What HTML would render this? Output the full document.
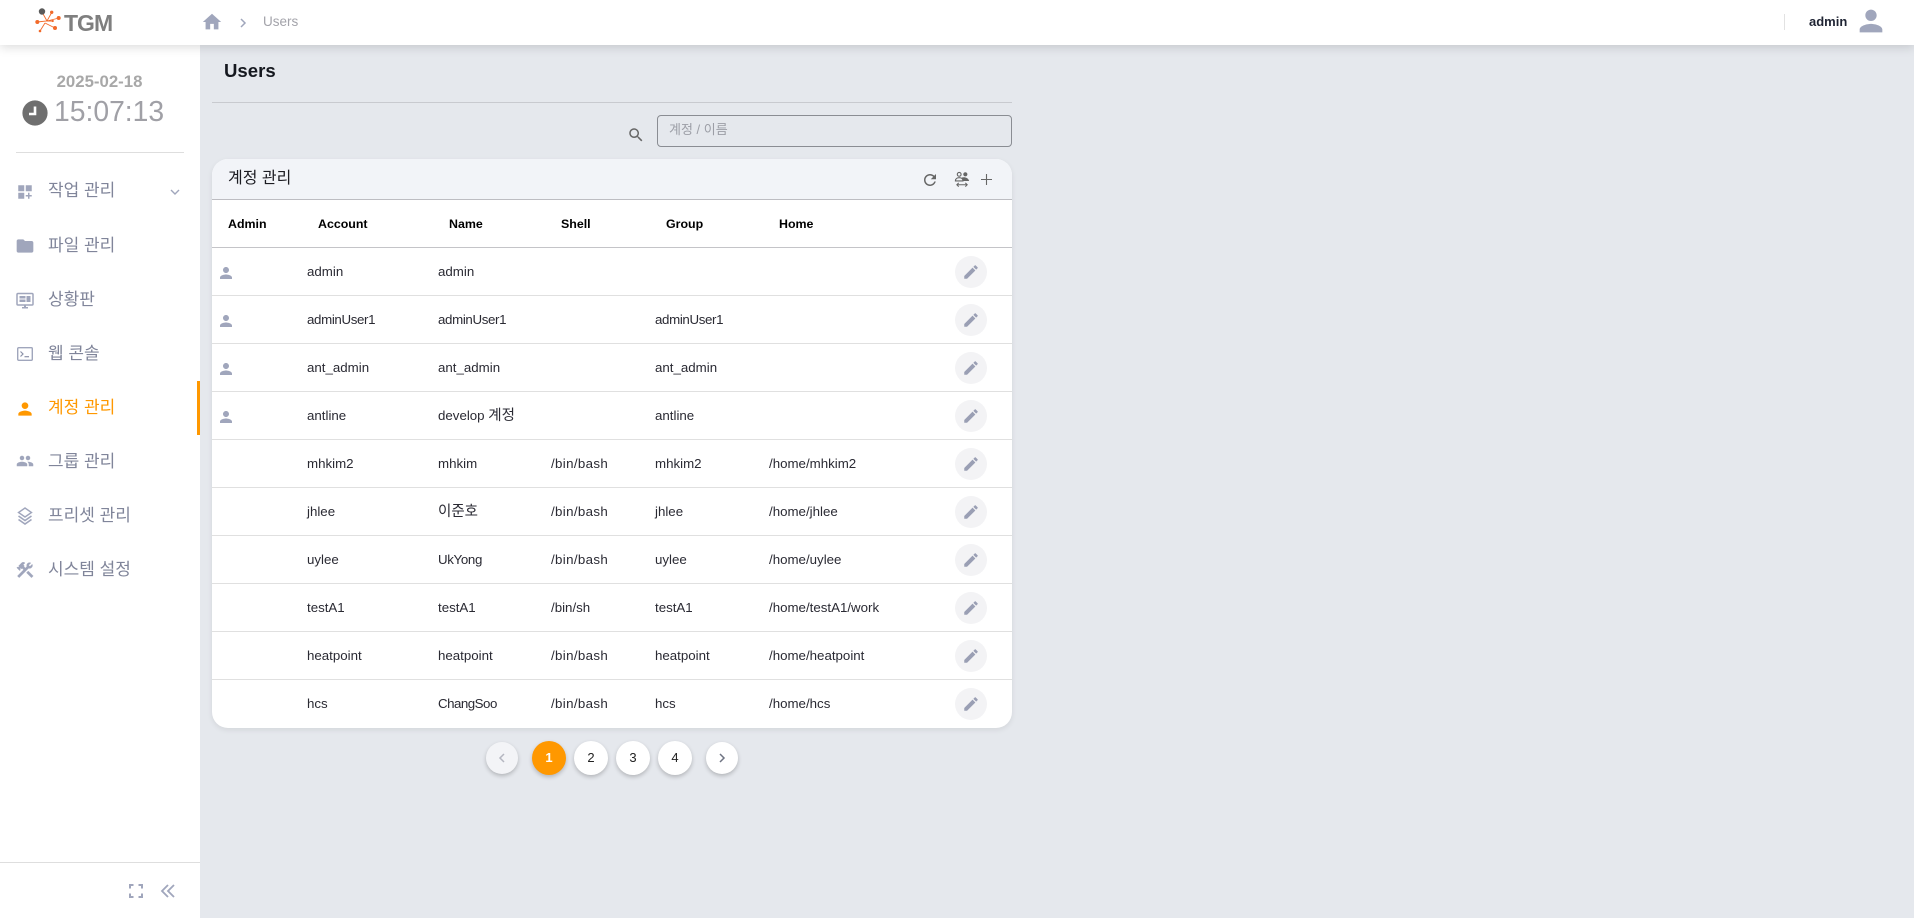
<!DOCTYPE html>
<html lang="ko"><head><meta charset="utf-8"><title>Users</title>
<style>
*{box-sizing:border-box}
html,body{margin:0;padding:0;width:1914px;height:918px;overflow:hidden;background:#e5e8ed;font-family:"Liberation Sans","Noto Sans CJK KR",sans-serif;color:#222}
.a{position:absolute;white-space:nowrap}
svg{position:absolute;display:block}
#hd{position:absolute;left:0;top:0;width:1914px;height:45px;background:#fff;box-shadow:0 2px 10px rgba(0,0,0,.15);z-index:5}
#sb{position:absolute;left:0;top:0;width:200px;height:918px;background:#fff;z-index:3}
.nav{position:absolute;left:48px;font-size:17px;line-height:24px;color:#80859a;white-space:nowrap}
.ic{fill:#a0a6bc}
#card{position:absolute;left:212px;top:159px;width:800px;height:569px;background:#fff;border-radius:16px;box-shadow:0 2px 6px rgba(0,0,0,.08);overflow:hidden}
#ch{position:absolute;left:0;top:0;width:800px;height:41px;background:#f2f4f8;border-bottom:1px solid #bdbdc2}
.th{position:absolute;top:57px;font-size:12.4px;font-weight:bold;line-height:16px;color:#000;white-space:nowrap}
#thl{position:absolute;left:0;top:88px;width:800px;height:1px;background:#c4c4c8}
.r{position:absolute;left:0;width:800px;height:48px;border-bottom:1px solid #e0e0e0}
.r span{position:absolute;top:14px;font-size:13.3px;line-height:20px;color:#2a2a33;white-space:nowrap}
.r .c1{left:95px}.r .c2{left:226px}.r .c3{left:339px;letter-spacing:.35px}.r .c4{left:443px}.r .c5{left:557px}
.r .sh{letter-spacing:0}.r .n{letter-spacing:-.35px}.r .g{letter-spacing:-.5px}
.r i{font-style:normal;font-size:14.5px}
.e{position:absolute;left:743px;top:8px;width:32px;height:32px;border-radius:50%;background:#f3f3f5}
.e svg{left:7px;top:7px;width:18px;height:18px;fill:#9a9fb4}
.u{position:absolute;left:5px;top:16px;width:18px;height:18px;fill:#a0a6bc}
.p{position:absolute;border-radius:50%;background:#fff;box-shadow:0 2px 4px rgba(0,0,0,.22);text-align:center;font-size:13px;color:#222}
</style></head><body>
<svg width="0" height="0" style="position:absolute"><defs>
<symbol id="pen" viewBox="0 0 24 24"><path d="M3 17.25V21h3.75L17.81 9.94l-3.75-3.75L3 17.25zM20.71 7.04c.39-.39.39-1.02 0-1.41l-2.34-2.34c-.39-.39-1.02-.39-1.41 0l-1.83 1.83 3.75 3.75 1.83-1.83z"/></symbol>
<symbol id="usr" viewBox="0 0 24 24"><path d="M12 12c2.21 0 4-1.79 4-4s-1.79-4-4-4-4 1.79-4 4 1.79 4 4 4zm0 2c-2.67 0-8 1.34-8 4v2h16v-2c0-2.66-5.33-4-8-4z"/></symbol>
</defs></svg>

<div id="sb">
  <div class="a" style="left:0;width:200px;top:72px;text-align:center;font-size:16.8px;line-height:20px;font-weight:bold;color:#a8a8a8;text-indent:-1px">2025-02-18</div>
  <svg style="left:22px;top:100px;width:26px;height:26px" viewBox="0 0 26 26"><circle cx="13" cy="13" r="12.6" fill="#6f6f6f"/><path d="M13 6.5v7.5H7" fill="none" stroke="#fff" stroke-width="2.6"/></svg>
  <div class="a" style="left:54px;top:93px;font-size:28.3px;line-height:36px;color:#a0a0a6">15:07:13</div>
  <div class="a" style="left:16px;top:152px;width:168px;height:1px;background:#dedede"></div>

  <svg class="ic" style="left:16px;top:183px;width:18px;height:18px" viewBox="0 0 24 24"><path d="M3 3h8v8H3zm10 0h8v8h-8zM3 13h8v8H3zm15 0h-2v3h-3v2h3v3h2v-3h3v-2h-3z"/></svg>
  <div class="nav" style="top:179px">작업 관리</div>
  <svg style="left:169px;top:186px;width:12px;height:12px" viewBox="0 0 12 12"><path d="M2 4l4 4 4-4" fill="none" stroke="#a0a6bc" stroke-width="1.4"/></svg>

  <svg class="ic" style="left:15px;top:236px;width:20px;height:20px" viewBox="0 0 24 24"><path d="M10 4H4c-1.1 0-1.99.9-1.99 2L2 18c0 1.1.9 2 2 2h16c1.1 0 2-.9 2-2V8c0-1.1-.9-2-2-2h-8l-2-2z"/></svg>
  <div class="nav" style="top:234px">파일 관리</div>

  <svg style="left:16px;top:292px;width:18px;height:18px" viewBox="0 0 18 18"><rect x="1" y="1.5" width="16" height="11.5" rx="1" fill="none" stroke="#a0a6bc" stroke-width="1.5"/><path d="M3.5 4h6v2.5h-6zM10.5 4h4v6h-4zM3.5 7.5h6V10h-6zM6 15h6v1.5H6zM8 13h2v2H8z" fill="#a0a6bc"/></svg>
  <div class="nav" style="top:288px">상황판</div>

  <svg style="left:17px;top:347px;width:16px;height:14px" viewBox="0 0 16 14"><rect x=".7" y=".7" width="14.6" height="12.6" rx="1" fill="none" stroke="#a0a6bc" stroke-width="1.4"/><path d="M3.5 4.5l2.5 2.5-2.5 2.5" fill="none" stroke="#8c92a8" stroke-width="1.2"/><path d="M7.5 9.7h4.5" stroke="#8c92a8" stroke-width="1.2"/></svg>
  <div class="nav" style="top:342px">웹 콘솔</div>

  <svg style="left:15px;top:399px;width:20px;height:20px;fill:#ff9800" viewBox="0 0 24 24"><use href="#usr"/></svg>
  <div class="nav" style="top:396px;color:#ff9800">계정 관리</div>
  <div class="a" style="left:197px;top:381px;width:3px;height:54px;background:#ff9800"></div>

  <svg class="ic" style="left:16px;top:452px;width:18px;height:18px" viewBox="0 0 24 24"><path d="M16 11c1.66 0 2.99-1.34 2.99-3S17.66 5 16 5c-1.66 0-3 1.34-3 3s1.34 3 3 3zm-8 0c1.66 0 2.99-1.34 2.99-3S9.66 5 8 5C6.34 5 5 6.34 5 8s1.34 3 3 3zm0 2c-2.33 0-7 1.17-7 3.5V19h14v-2.5c0-2.33-4.67-3.5-7-3.5zm8 0c-.29 0-.62.02-.97.05 1.16.84 1.97 1.97 1.97 3.45V19h6v-2.5c0-2.33-4.67-3.5-7-3.5z"/></svg>
  <div class="nav" style="top:450px">그룹 관리</div>

  <svg style="left:17px;top:507px;width:16px;height:19px" viewBox="0 0 16 19"><path d="M8 1l6.5 4.5L8 10 1.500 5.500z" fill="none" stroke="#a0a6bc" stroke-width="1.4"/><path d="M1.500 9L8 13.500 14.500 9M1.500 12.500L8 17l6.500-4.500" fill="none" stroke="#a0a6bc" stroke-width="1.6"/></svg>
  <div class="nav" style="top:504px">프리셋 관리</div>

  <svg class="ic" style="left:15px;top:560px;width:20px;height:20px" viewBox="0 0 24 24"><path stroke="#a0a6bc" stroke-width=".4" d="M13.78 15.3L19.78 21.3L21.89 19.14L15.89 13.14L13.78 15.3M17.5 10.1C17.11 10.1 16.69 10.05 16.36 9.91L4.97 21.25L2.86 19.14L10.27 11.74L8.5 9.96L7.78 10.66L6.33 9.25V12.11L5.63 12.81L2.11 9.25L2.81 8.55H5.62L4.22 7.14L7.78 3.58C8.95 2.41 10.83 2.41 12 3.58L9.89 5.74L11.3 7.14L10.59 7.85L12.38 9.63L14.2 7.75C14.06 7.42 14 7 14 6.63C14 4.66 15.56 3.11 17.5 3.11C18.09 3.11 18.61 3.25 19.08 3.53L16.41 6.2L17.91 7.7L20.58 5.03C20.86 5.5 21 6 21 6.63C21 8.55 19.45 10.1 17.5 10.1Z"/></svg>
  <div class="nav" style="top:558px">시스템 설정</div>

  <div class="a" style="left:0;top:862px;width:200px;height:1px;background:#dedede"></div>
  <svg style="left:129px;top:884px;width:14px;height:14px" viewBox="0 0 14 14"><path d="M1 4.500V1H4.500M9.500 1H13V4.500M13 9.500V13H9.500M4.500 13H1V9.500" fill="none" stroke="#a0a6bc" stroke-width="2"/></svg>
  <svg style="left:160px;top:883px;width:16px;height:16px" viewBox="0 0 16 16"><path d="M8 2L2 8l6 6M14 2L8 8l6 6" fill="none" stroke="#a0a6bc" stroke-width="1.8"/></svg>
</div>

<div id="hd">
  <svg style="left:34px;top:7px;width:30px;height:27px" viewBox="0 0 30 27">
    <g stroke="#f26a2a" stroke-width=".9" fill="none"><path d="M8 5l5 9M3 15l10-1 5-9M13 14l12-3M13 14h6M11 16l10 5M11 16l-5 8"/></g>
    <circle cx="8" cy="4.500" r="3.200" fill="#5a5a5a"/>
    <g fill="#f26a2a"><circle cx="17.700" cy="5.300" r="1.700"/><circle cx="24.700" cy="11" r="2"/><circle cx="3.300" cy="15" r="2"/><circle cx="21" cy="21" r="2"/><circle cx="6" cy="24" r="1.300"/><circle cx="18.700" cy="14" r="1.100"/></g>
  </svg>
  <div class="a" style="left:64px;top:9px;font-size:23px;line-height:28px;font-weight:bold;color:#7f7f7f;letter-spacing:-1px">TGM</div>
  <svg class="ic" style="left:201px;top:11px;width:22px;height:22px" viewBox="0 0 24 24"><path d="M10 20v-6h4v6h5v-8h3L12 3 2 12h3v8z"/></svg>
  <svg style="left:238px;top:17px;width:10px;height:12px" viewBox="0 0 10 12"><path d="M3 2l4 4-4 4" fill="none" stroke="#a0a6bc" stroke-width="1.500"/></svg>
  <div class="a" style="left:263px;top:13px;font-size:13.5px;line-height:18px;color:#a3a3aa">Users</div>
  <div class="a" style="left:1784px;top:14px;width:1px;height:16px;background:#e2e2e2"></div>
  <div class="a" style="left:1809px;top:14px;font-size:13px;line-height:16px;font-weight:bold;color:#1f2433">admin</div>
  <svg class="ic" style="left:1854px;top:4px;width:34px;height:34px" viewBox="0 0 24 24"><use href="#usr"/></svg>
</div>

<div class="a" style="left:224px;top:59px;font-size:18.6px;line-height:24px;font-weight:bold;color:#15181f">Users</div>
<div class="a" style="left:212px;top:102px;width:800px;height:1px;background:#c8cacf"></div>
<svg style="left:627px;top:126px;width:18px;height:18px;fill:#666" viewBox="0 0 24 24"><path d="M15.5 14h-.79l-.28-.27C15.41 12.59 16 11.11 16 9.5 16 5.91 13.09 3 9.5 3S3 5.91 3 9.5 5.91 16 9.5 16c1.61 0 3.09-.59 4.23-1.57l.27.28v.79l5 4.99L20.49 19l-4.99-5zm-6 0C7.01 14 5 11.99 5 9.5S7.01 5 9.500 5 14 7.01 14 9.500 11.99 14 9.500 14z"/></svg>
<div class="a" style="left:657px;top:115px;width:355px;height:32px;border:1px solid #8a8d93;border-radius:4px"></div>
<div class="a" style="left:669px;top:120px;font-size:13px;line-height:20px;color:#9c9ea6">계정 / 이름</div>

<div id="card">
  <div id="ch"></div>
  <div class="a" style="left:16px;top:8px;font-size:16px;line-height:24px;color:#1c1c22">계정 관리</div>
  <svg style="left:709px;top:12px;width:18px;height:18px;fill:#666" viewBox="0 0 24 24"><path d="M17.65 6.35C16.2 4.9 14.21 4 12 4c-4.42 0-7.99 3.58-7.99 8s3.57 8 7.99 8c3.73 0 6.84-2.55 7.73-6h-2.08c-.82 2.33-3.04 4-5.65 4-3.31 0-6-2.69-6-6s2.69-6 6-6c1.66 0 3.14.69 4.22 1.78L13 11h7V4l-2.35 2.35z"/></svg>
  <svg style="left:742px;top:12px;width:17px;height:18px" viewBox="0 0 18 18"><circle cx="5.500" cy="3" r="2" fill="none" stroke="#666" stroke-width="1.200"/><circle cx="12" cy="3" r="2.200" fill="#666"/><path d="M1.500 10c0-2.500 2-3.500 4-3.500s4 1 4 3.500z" fill="none" stroke="#666" stroke-width="1.200"/><path d="M8 6.500c3-1 7 0 8 3.500H10z" fill="#666"/><path d="M3 14h11M5 12l-2 2 2 2M12 12l2 2-2 2" fill="none" stroke="#666" stroke-width="1.100"/></svg>
  <svg style="left:767px;top:13px;width:15px;height:15px" viewBox="0 0 15 15"><path d="M7.500 2v11M2 7.500h11" stroke="#666" stroke-width="1.100" fill="none"/></svg>

  <div class="th" style="left:16px">Admin</div>
  <div class="th" style="left:106px">Account</div>
  <div class="th" style="left:237px">Name</div>
  <div class="th" style="left:349px">Shell</div>
  <div class="th" style="left:454px">Group</div>
  <div class="th" style="left:567px">Home</div>
  <div id="thl"></div>

  <div class="r" style="top:89px"><svg class="u" viewBox="0 0 24 24"><use href="#usr"/></svg><span class="c1">admin</span><span class="c2">admin</span><div class="e"><svg viewBox="0 0 24 24"><use href="#pen"/></svg></div></div>
  <div class="r" style="top:137px"><svg class="u" viewBox="0 0 24 24"><use href="#usr"/></svg><span class="c1 n">adminUser1</span><span class="c2 n">adminUser1</span><span class="c4 n">adminUser1</span><div class="e"><svg viewBox="0 0 24 24"><use href="#pen"/></svg></div></div>
  <div class="r" style="top:185px"><svg class="u" viewBox="0 0 24 24"><use href="#usr"/></svg><span class="c1">ant_admin</span><span class="c2">ant_admin</span><span class="c4">ant_admin</span><div class="e"><svg viewBox="0 0 24 24"><use href="#pen"/></svg></div></div>
  <div class="r" style="top:233px"><svg class="u" viewBox="0 0 24 24"><use href="#usr"/></svg><span class="c1">antline</span><span class="c2">develop <i>계정</i></span><span class="c4">antline</span><div class="e"><svg viewBox="0 0 24 24"><use href="#pen"/></svg></div></div>
  <div class="r" style="top:281px"><span class="c1">mhkim2</span><span class="c2">mhkim</span><span class="c3">/bin/bash</span><span class="c4">mhkim2</span><span class="c5">/home/mhkim2</span><div class="e"><svg viewBox="0 0 24 24"><use href="#pen"/></svg></div></div>
  <div class="r" style="top:329px"><span class="c1">jhlee</span><span class="c2"><i>이준호</i></span><span class="c3">/bin/bash</span><span class="c4">jhlee</span><span class="c5">/home/jhlee</span><div class="e"><svg viewBox="0 0 24 24"><use href="#pen"/></svg></div></div>
  <div class="r" style="top:377px"><span class="c1">uylee</span><span class="c2 n">UkYong</span><span class="c3">/bin/bash</span><span class="c4">uylee</span><span class="c5">/home/uylee</span><div class="e"><svg viewBox="0 0 24 24"><use href="#pen"/></svg></div></div>
  <div class="r" style="top:425px"><span class="c1">testA1</span><span class="c2">testA1</span><span class="c3 sh">/bin/sh</span><span class="c4">testA1</span><span class="c5">/home/testA1/work</span><div class="e"><svg viewBox="0 0 24 24"><use href="#pen"/></svg></div></div>
  <div class="r" style="top:473px"><span class="c1">heatpoint</span><span class="c2">heatpoint</span><span class="c3">/bin/bash</span><span class="c4">heatpoint</span><span class="c5">/home/heatpoint</span><div class="e"><svg viewBox="0 0 24 24"><use href="#pen"/></svg></div></div>
  <div class="r" style="top:521px;border-bottom:0"><span class="c1">hcs</span><span class="c2 g">ChangSoo</span><span class="c3">/bin/bash</span><span class="c4">hcs</span><span class="c5">/home/hcs</span><div class="e"><svg viewBox="0 0 24 24"><use href="#pen"/></svg></div></div>
</div>

<div class="p" style="left:486px;top:742px;width:32px;height:32px;background:#f3f4f7"><svg style="left:11px;top:10px;width:10px;height:12px" viewBox="0 0 10 12"><path d="M7 2L3 6l4 4" fill="none" stroke="#b4b6c0" stroke-width="1.500"/></svg></div>
<div class="p" style="left:532px;top:741px;width:34px;height:34px;line-height:34px;background:#ff9800;color:#fff;font-weight:bold">1</div>
<div class="p" style="left:574px;top:741px;width:34px;height:34px;line-height:34px">2</div>
<div class="p" style="left:616px;top:741px;width:34px;height:34px;line-height:34px">3</div>
<div class="p" style="left:658px;top:741px;width:34px;height:34px;line-height:34px">4</div>
<div class="p" style="left:706px;top:742px;width:32px;height:32px"><svg style="left:11px;top:10px;width:10px;height:12px" viewBox="0 0 10 12"><path d="M3 2l4 4-4 4" fill="none" stroke="#6f7483" stroke-width="1.500"/></svg></div>

</body></html>
